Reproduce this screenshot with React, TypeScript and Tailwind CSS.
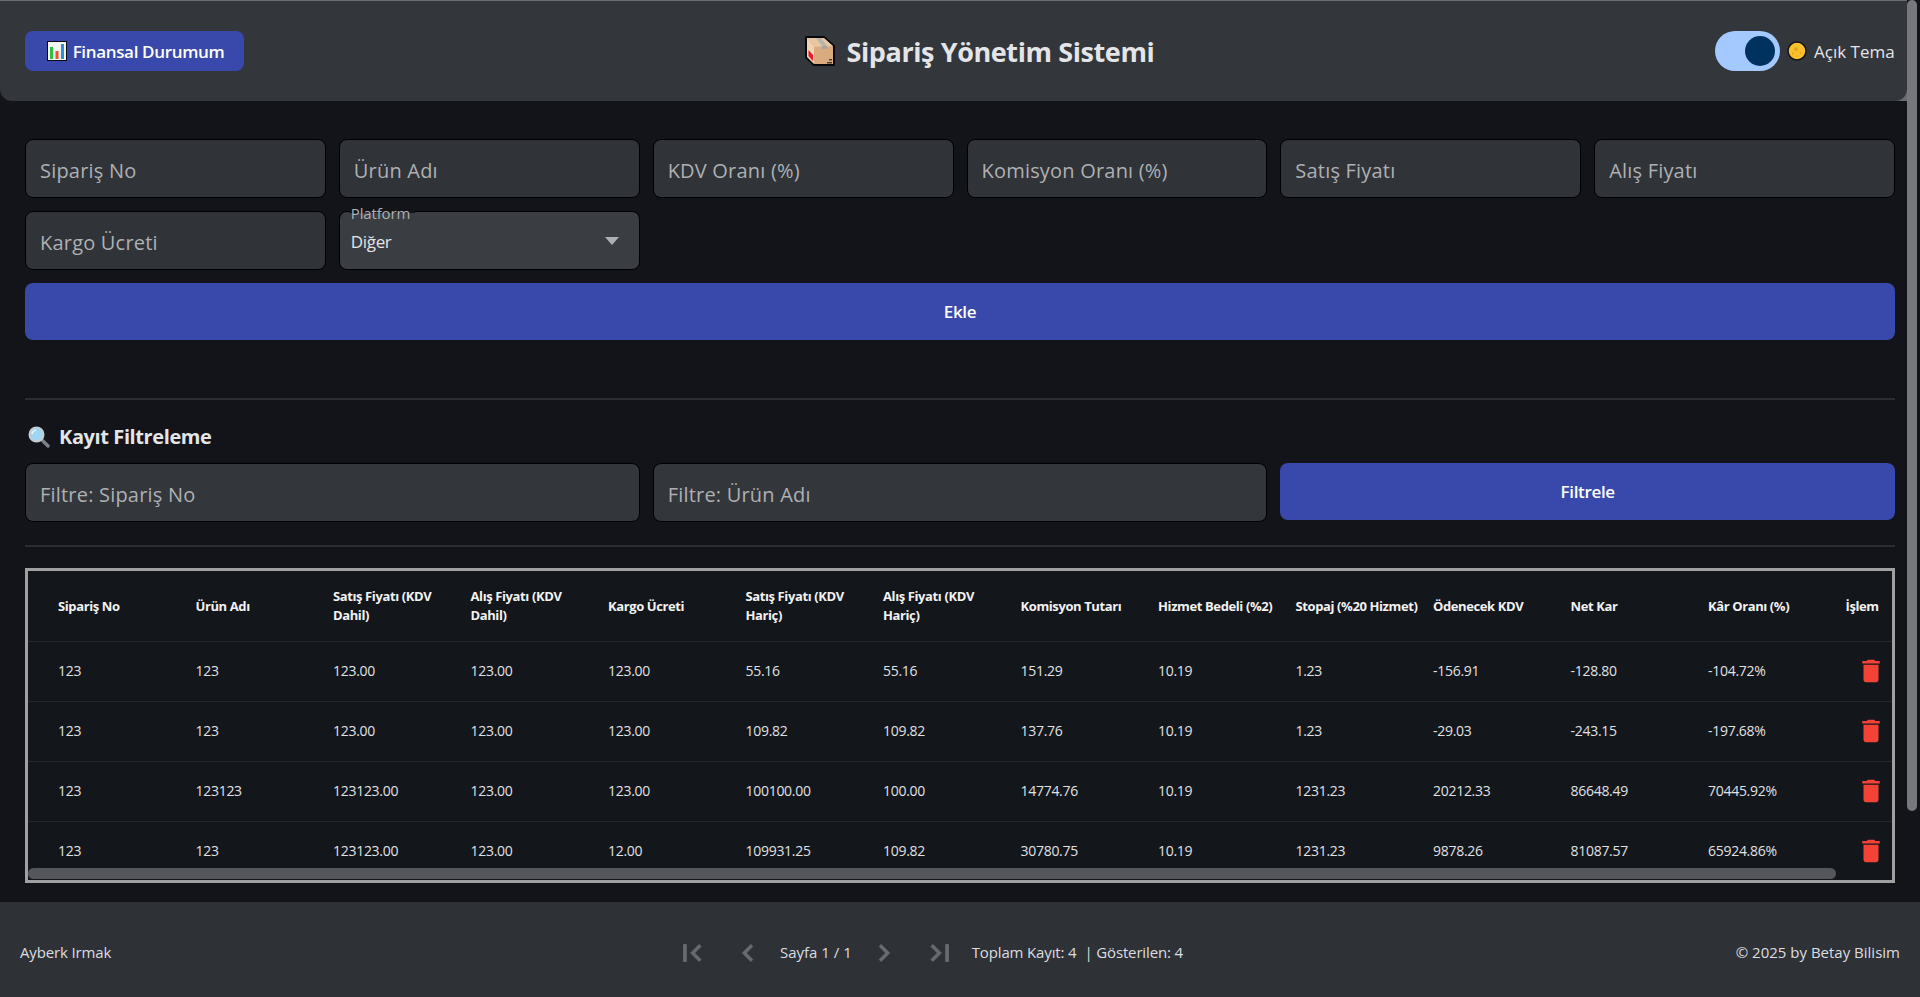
import { MdDelete } from "react-icons/md";

const headers = [
  "Sipariş No", "Ürün Adı", "Satış Fiyatı (KDV Dahil)", "Alış Fiyatı (KDV Dahil)", "Kargo Ücreti",
  "Satış Fiyatı (KDV Hariç)", "Alış Fiyatı (KDV Hariç)", "Komisyon Tutarı", "Hizmet Bedeli (%2)",
  "Stopaj (%20 Hizmet)", "Ödenecek KDV", "Net Kar", "Kâr Oranı (%)", "İşlem",
];

const rows = [
  ["123", "123", "123.00", "123.00", "123.00", "55.16", "55.16", "151.29", "10.19", "1.23", "-156.91", "-128.80", "-104.72%"],
  ["123", "123", "123.00", "123.00", "123.00", "109.82", "109.82", "137.76", "10.19", "1.23", "-29.03", "-243.15", "-197.68%"],
  ["123", "123123", "123123.00", "123.00", "123.00", "100100.00", "100.00", "14774.76", "10.19", "1231.23", "20212.33", "86648.49", "70445.92%"],
  ["123", "123", "123123.00", "123.00", "12.00", "109931.25", "109.82", "30780.75", "10.19", "1231.23", "9878.26", "81087.57", "65924.86%"],
];

const inputCls =
  "w-full h-[59px] px-[14px] pt-[4px] border border-black rounded-lg text-[20px] tracking-[0.01em] outline-none placeholder:text-[#aeb0b4]";

function ChartIcon() {
  return (
    <svg width="20" height="20" viewBox="0 0 20 20" className="shrink-0">
      <rect x="0.5" y="0.5" width="19" height="19" fill="#f4f4f4" stroke="#0a0a14" />
      <rect x="3" y="6" width="3" height="12" fill="#2fbf3f" />
      <rect x="8.5" y="10" width="3" height="8" fill="#f0532d" />
      <rect x="14" y="3" width="3" height="15" fill="#2c8fe0" />
    </svg>
  );
}

function BoxIcon() {
  return (
    <svg width="32" height="32" viewBox="0 0 32 32" className="shrink-0">
      <path d="M2 2 L20 2 L30 11 L30 30 L10 30 L2 22 Z" fill="#d9ab7f" stroke="#08080a" strokeWidth="2" strokeLinejoin="round" />
      <path d="M3 3 L20 3 L29 11 L10 12 Z" fill="#e8c6a0" />
      <path d="M3 3 L10 12 L10 29 L3 22 Z" fill="#efd3b4" />
      <path d="M12 3 L17 3 L23 11 L18 11 Z" fill="#b9b5ad" />
      <path d="M18 11 H23 V14 H18 Z" fill="#a9a59e" />
      <path d="M4.5 15 L9 20 L9 26 L4.5 21 Z" fill="#e8192c" />
      <rect x="25" y="24" width="3" height="1.5" fill="#4a3c30" />
      <rect x="23" y="27" width="5" height="1.5" fill="#4a3c30" />
    </svg>
  );
}

function MoonIcon() {
  return (
    <svg width="20" height="20" viewBox="0 0 20 20" className="shrink-0">
      <circle cx="10" cy="10" r="9" fill="#fbc02d" stroke="#14141a" strokeWidth="1.5" />
      <circle cx="9" cy="8" r="2" fill="#e8a317" />
      <circle cx="13.5" cy="12" r="1" fill="#e8a317" />
      <circle cx="6" cy="12.5" r="1" fill="#e8a317" />
      <circle cx="10" cy="15" r="0.8" fill="#e8a317" />
    </svg>
  );
}

function SearchIcon() {
  return (
    <svg width="22" height="22" viewBox="0 0 22 22" className="shrink-0">
      <path d="M13 13 L20 20" stroke="#7d8288" strokeWidth="3.4" strokeLinecap="round" />
      <circle cx="8.5" cy="8.5" r="7" fill="#9fd4f2" stroke="#c4ccd2" strokeWidth="2" />
      <path d="M4 8 A5 5 0 0 1 8 4" fill="none" stroke="#e3f4fd" strokeWidth="1.6" />
    </svg>
  );
}

// pager icons, a bit heavier than the stock ones
function PageIcon({ d }: { d: string }) {
  return (
    <span className="w-14 flex justify-center text-[#696b6f]">
      <svg width="34" height="34" viewBox="0 0 24 24" fill="currentColor" stroke="currentColor" strokeWidth="0.6">
        <path d={d} />
      </svg>
    </span>
  );
}

export default function App() {
  return (
    <div className="relative h-screen overflow-hidden flex bg-[#121419] text-[#e4e5e8] font-['Open_Sans',sans-serif]">
      <div className="flex-1 min-w-0">
        <div className="relative">
          <span className="absolute right-0 top-[85px] w-4 h-4 bg-[#6a6b70]" />
          <header className="relative h-[101px] border-t border-[#6b6d70] bg-[#33363b] rounded-b-xl pl-[25px] pr-[12px] flex items-center justify-between">
            <button className="h-10 w-[219px] pl-[2px] bg-[#3949ab] rounded-lg flex items-center justify-center gap-[6px] text-white text-[17px] font-semibold tracking-[-0.02em]">
              <ChartIcon />
              <span className="pt-[2px]">Finansal Durumum</span>
            </button>
            <div className="flex items-center gap-[11px] w-[352px]">
              <BoxIcon />
              <h1 className="pt-[3px] text-[27px] font-bold whitespace-nowrap tracking-[-0.015em]">Sipariş Yönetim Sistemi</h1>
            </div>
            <div className="flex items-center w-[180px]">
              <div className="w-[65px] h-10 rounded-full bg-[#a3c9ff] flex items-center justify-end pr-[5px] shrink-0">
                <div className="w-[30px] h-[30px] rounded-full bg-[#00325f]" />
              </div>
              <div className="ml-[7px]">
                <MoonIcon />
              </div>
              <span className="ml-[7px] pt-[2px] text-[17px] whitespace-nowrap">Açık Tema</span>
            </div>
          </header>
        </div>

        <main className="pl-[25px] pr-[12px] pt-[38px]">
          <div className="grid grid-cols-6 gap-[13px]">
            <input className={inputCls + " bg-[#303338]"} placeholder="Sipariş No" />
            <input className={inputCls + " bg-[#303338]"} placeholder="Ürün Adı" />
            <input className={inputCls + " bg-[#303338]"} placeholder="KDV Oranı (%)" />
            <input className={inputCls + " bg-[#303338]"} placeholder="Komisyon Oranı (%)" />
            <input className={inputCls + " bg-[#303338]"} placeholder="Satış Fiyatı" />
            <input className={inputCls + " bg-[#303338]"} placeholder="Alış Fiyatı" />
            <input className={inputCls + " bg-[#303338]"} placeholder="Kargo Ücreti" />
            <div className="relative h-[59px] bg-[#3a3d42] border border-black rounded-lg pl-[11px] pr-[10px] flex items-center justify-between">
              <span className="absolute left-[9px] -top-[1px] w-[66px] h-[2px] bg-[#121419]" />
              <span className="absolute left-[11px] -top-[7px] text-[15px] leading-4 text-[#aeb0b4] tracking-[-0.01em]">Platform</span>
              <span className="pt-[3px] text-[17px] tracking-[-0.02em]">Diğer</span>
              <svg width="14" height="8" viewBox="0 0 14 8" className="mr-[10px]">
                <path d="M0 0 H14 L7 8 Z" fill="#aeb0b4" />
              </svg>
            </div>
          </div>

          <button className="w-full h-[57px] mt-[13px] bg-[#3949ab] rounded-lg text-white text-[17px] font-semibold tracking-[-0.02em]">Ekle</button>

          <hr className="mt-[58px] border-t-2 border-[#2a2d31]" />

          <div className="mt-[25px] flex items-center gap-[9px] h-6 pl-[3px]">
            <SearchIcon />
            <h2 className="text-[20px] font-bold tracking-[-0.02em]">Kayıt Filtreleme</h2>
          </div>

          <div className="mt-[14px] grid grid-cols-3 gap-[13px]">
            <input className={inputCls + " bg-[#33363b]"} placeholder="Filtre: Sipariş No" />
            <input className={inputCls + " bg-[#33363b]"} placeholder="Filtre: Ürün Adı" />
            <button className="h-[57px] bg-[#3949ab] rounded-lg text-white text-[17px] font-semibold tracking-[-0.02em]">Filtrele</button>
          </div>

          <hr className="mt-[23px] border-t-2 border-[#2a2d31]" />

          <div className="relative mt-[21px] h-[315px] border-[3px] border-[#a0a0a0] overflow-hidden bg-[#13161b]">
            <table className="table-fixed w-[1921px] border-collapse text-left">
              <thead>
                <tr className="h-[70px] border-b border-[#24272b]">
                  {headers.map((h, i) => (
                    <th
                      key={h}
                      className={`text-[13px] leading-[18.5px] font-bold tracking-[-0.03em] text-[#f2f2f2] pr-[11px] ${i === 0 ? "w-[167.5px] pl-[30px]" : i === 13 ? "w-[103.5px]" : "w-[137.5px]"}`}
                    >
                      {h}
                    </th>
                  ))}
                </tr>
              </thead>
              <tbody>
                {rows.map((row, r) => (
                  <tr key={r} className="h-[60px] border-b border-[#24272b]">
                    {row.map((cell, i) => (
                      <td key={i} className={`pb-[1px] text-[14px] tracking-[-0.02em] text-[#e0e1e4] ${i === 0 ? "pl-[30px]" : ""}`}>
                        {cell}
                      </td>
                    ))}
                    <td className="pl-[10px] text-[#f44336]">
                      <MdDelete size={30} />
                    </td>
                  </tr>
                ))}
              </tbody>
            </table>
            <div className="absolute inset-x-0 bottom-0 h-[12px] bg-[#13161b]">
              <div className="w-[1808px] h-[11px] rounded-[6px] bg-[#55565b]" />
            </div>
          </div>
        </main>
      </div>

      <div className="w-[13px] shrink-0">
        <div className="w-[10px] h-[811px] rounded-[5px] bg-[#77787d]" />
      </div>

      <footer className="absolute inset-x-0 bottom-0 h-[95px] bg-[#2e3136] pl-5 pr-5 pt-[6px] flex items-center justify-between text-[15px] tracking-[-0.01em] text-[#dcdde0]">
        <span>Ayberk Irmak</span>
        <div className="flex items-center">
          <PageIcon d="M18.41 16.59L13.82 12l4.59-4.59L17 6l-6 6 6 6zM6 6h2v12H6z" />
          <PageIcon d="M15.41 7.41L14 6l-6 6 6 6 1.41-1.41L10.83 12z" />
          <span className="ml-1 mr-1 whitespace-nowrap tracking-normal">Sayfa 1 / 1</span>
          <PageIcon d="M10 6L8.59 7.41 13.17 12l-4.58 4.59L10 18l6-6z" />
          <PageIcon d="M5.59 7.41L10.18 12l-4.59 4.59L7 18l6-6-6-6zM16 6h2v12h-2z" />
          <span className="ml-1 whitespace-nowrap">Toplam Kayıt: 4</span>
          <span className="ml-2 whitespace-nowrap">| Gösterilen: 4</span>
        </div>
        <span className="tracking-normal">© 2025 by Betay Bilisim</span>
      </footer>
    </div>
  );
}
